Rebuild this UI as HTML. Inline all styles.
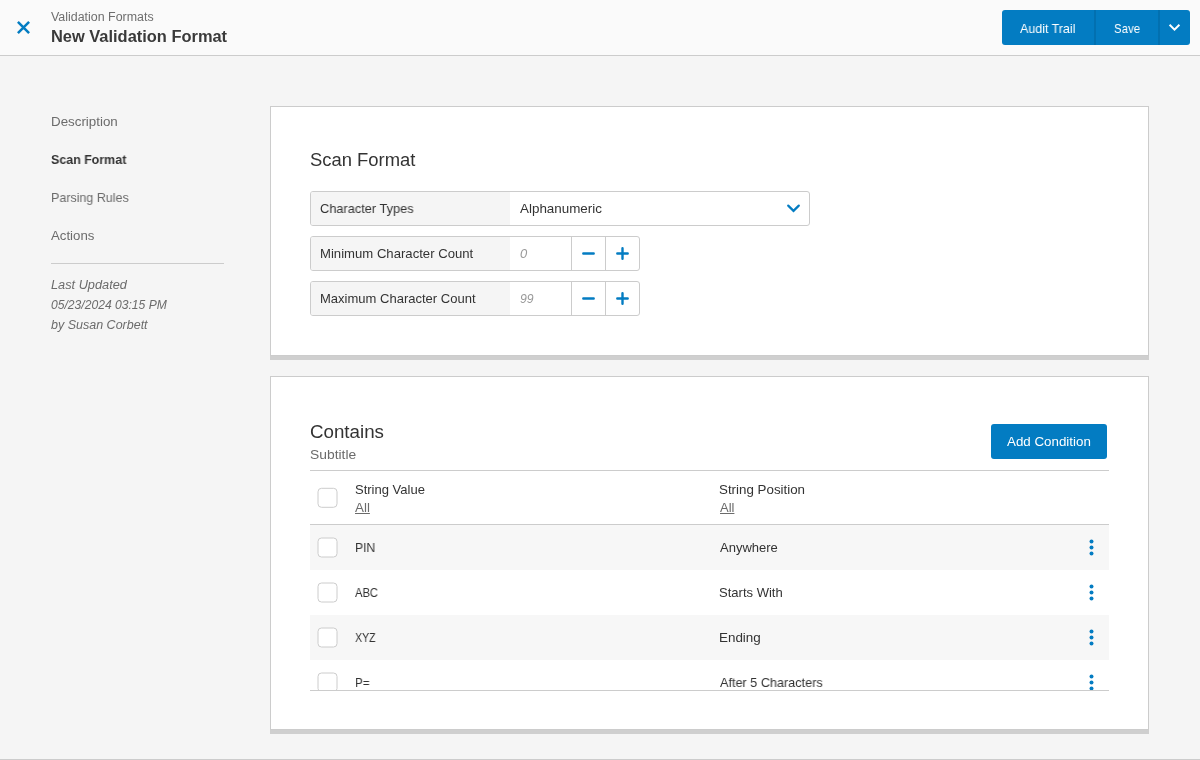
<!DOCTYPE html>
<html lang="en">
<head>
<meta charset="utf-8">
<title>New Validation Format</title>
<style>
*{box-sizing:border-box;margin:0;padding:0}
html,body{width:1200px;height:760px;overflow:hidden}
body{background:#f5f5f5;font-family:"Liberation Sans",sans-serif;color:#333;font-size:13px;position:relative}
.abs{position:absolute}
.t{position:absolute;white-space:nowrap;line-height:1;transform-origin:0 0;will-change:transform}
#hdr{left:0;top:0;width:1200px;height:56px;background:#fafafa;border-bottom:1px solid #ccc}
.btn{position:absolute;background:#037cc2}
.card{position:absolute;left:270px;width:879px;background:#fff;border:1px solid #ccc;box-shadow:0 4px 0 0 #cfcfcf}
.fld{position:absolute;left:310px;height:35px;border:1px solid #ccc;border-radius:3px;background:#fff;overflow:hidden}
.fld .lab{position:absolute;left:0;top:0;width:199px;height:33px;background:#f5f5f5}
.vsep{position:absolute;top:0;width:1px;height:33px;background:#ccc}
.hl{position:absolute;left:310px;width:799px;height:1px;background:#ccc}
.row{position:absolute;left:310px;width:799px;height:45px}
.row.g{background:#f7f7f7}
svg{position:absolute;overflow:visible}
</style>
</head>
<body>
<!-- header -->
<div id="hdr" class="abs"></div>
<svg style="left:0;top:0" width="60" height="56"><path d="M17.9 21.9 L29.1 33.1 M29.1 21.9 L17.9 33.1" stroke="#037cc2" stroke-width="2.5" fill="none"/></svg>
<div class="t" id="crumb" style="left:51px;top:11px;font-size:12px;transform:scaleX(1.0355);color:#6e6e6e">Validation Formats</div>
<div class="t" id="title" style="left:51px;top:29px;font-size:16px;transform:scaleX(1.0262);font-weight:bold;color:#3a3a3a">New Validation Format</div>

<div class="btn" style="left:1002px;top:10px;width:188px;height:35px;border-radius:3px"></div>
<div class="abs" style="left:1094px;top:10px;width:2px;height:35px;background:#0270b0"></div>
<div class="abs" style="left:1158px;top:10px;width:2px;height:35px;background:#0270b0"></div>
<div class="t" id="b1" style="left:1020px;top:22px;font-size:13px;transform:scaleX(0.9584);color:#fff">Audit Trail</div>
<div class="t" id="b2" style="left:1114px;top:22px;font-size:13px;transform:scaleX(0.8792);color:#fff">Save</div>
<svg style="left:1160px;top:10px" width="30" height="35"><path d="M9.6 14.8 L14.5 19.7 L19.4 14.8" stroke="#fff" stroke-width="2" fill="none"/></svg>

<!-- side nav -->
<div class="t" id="n1" style="left:51px;top:115px;font-size:13px;transform:scaleX(1.0273);color:#6b6b6b">Description</div>
<div class="t" id="n2" style="left:51px;top:153px;font-size:13px;transform:scaleX(0.9559);font-weight:bold;color:#333">Scan Format</div>
<div class="t" id="n3" style="left:51px;top:191px;font-size:13px;transform:scaleX(0.9604);color:#6b6b6b">Parsing Rules</div>
<div class="t" id="n4" style="left:51px;top:229px;font-size:13px;transform:scaleX(1.0173);color:#6b6b6b">Actions</div>
<div class="abs" style="left:51px;top:263px;width:173px;height:1px;background:#ccc"></div>
<div class="t" id="m1" style="left:51px;top:279px;font-size:12px;transform:scaleX(1.0630);font-style:italic;color:#6b6b6b">Last Updated</div>
<div class="t" id="m2" style="left:51px;top:299px;font-size:12px;transform:scaleX(1.0093);font-style:italic;color:#6b6b6b">05/23/2024 03:15 PM</div>
<div class="t" id="m3" style="left:51px;top:319px;font-size:12px;transform:scaleX(1.0418);font-style:italic;color:#6b6b6b">by Susan Corbett</div>

<!-- card 1 -->
<div class="card" style="top:106px;height:250px"></div>
<div class="t" id="h1" style="left:310px;top:151px;font-size:18.3px;transform:scaleX(1.0078);color:#333">Scan Format</div>

<div class="fld" style="top:191px;width:500px"><div class="lab"></div></div>
<div class="t" id="l1" style="left:320px;top:202px;font-size:13px;transform:scaleX(0.9829);color:#333">Character Types</div>
<div class="t" id="v1" style="left:520px;top:202px;font-size:13px;transform:scaleX(1.0313);color:#333">Alphanumeric</div>
<svg style="left:780px;top:195px" width="28" height="28"><path d="M8.2 10.6 L13.5 15.9 L18.8 10.6" stroke="#037cc2" stroke-width="2.2" stroke-linecap="round" fill="none"/></svg>

<div class="fld" style="top:236px;width:330px"><div class="lab"></div><div class="vsep" style="left:260px"></div><div class="vsep" style="left:294px"></div></div>
<div class="t" id="l2" style="left:320px;top:247px;font-size:13px;transform:scaleX(1.0098);color:#333">Minimum Character Count</div>
<div class="t" id="v2" style="left:520px;top:248px;font-size:12px;transform:scaleX(1.0800);font-style:italic;color:#999">0</div>
<svg style="left:572px;top:237px" width="68" height="33"><path d="M11.3 16.5 H21.7 M45.3 16.5 H55.7 M50.5 11.3 V21.7" stroke="#037cc2" stroke-width="2.4" stroke-linecap="round" fill="none"/></svg>

<div class="fld" style="top:281px;width:330px"><div class="lab"></div><div class="vsep" style="left:260px"></div><div class="vsep" style="left:294px"></div></div>
<div class="t" id="l3" style="left:320px;top:292px;font-size:13px;transform:scaleX(1.0013);color:#333">Maximum Character Count</div>
<div class="t" id="v3" style="left:520px;top:293px;font-size:12px;transform:scaleX(1.0200);font-style:italic;color:#999">99</div>
<svg style="left:572px;top:282px" width="68" height="33"><path d="M11.3 16.5 H21.7 M45.3 16.5 H55.7 M50.5 11.3 V21.7" stroke="#037cc2" stroke-width="2.4" stroke-linecap="round" fill="none"/></svg>

<!-- card 2 -->
<div class="card" style="top:376px;height:354px"></div>
<div class="t" id="h2" style="left:310px;top:423px;font-size:18.3px;transform:scaleX(1.0250);color:#333">Contains</div>
<div class="t" id="sub" style="left:310px;top:448px;font-size:13px;transform:scaleX(1.0649);color:#6b6b6b">Subtitle</div>
<div class="btn" style="left:991px;top:424px;width:116px;height:35px;border-radius:3px"></div>
<div class="t" id="b3" style="left:1007px;top:435px;font-size:13px;transform:scaleX(1.0262);color:#fff">Add Condition</div>

<div class="hl" style="top:470px"></div>
<div class="t" id="c1" style="left:355px;top:483px;font-size:13px;transform:scaleX(0.9955);color:#333">String Value</div>
<div class="t" id="a1" style="left:355px;top:502px;font-size:12px;transform:scaleX(1.1152);color:#6b6b6b;text-decoration:underline">All</div>
<div class="t" id="c2" style="left:719px;top:483px;font-size:13px;transform:scaleX(1.0265);color:#333">String Position</div>
<div class="t" id="a2" style="left:720px;top:502px;font-size:12px;transform:scaleX(1.0807);color:#6b6b6b;text-decoration:underline">All</div>
<div class="hl" style="top:524px"></div>

<div class="row g" style="top:525px"></div>
<div class="row g" style="top:615px"></div>

<div class="t" id="r1a" style="left:355px;top:541px;font-size:13px;transform:scaleX(0.9314);color:#333">PIN</div>
<div class="t" id="r1b" style="left:720px;top:541px;font-size:13px;transform:scaleX(0.9973);color:#333">Anywhere</div>
<div class="t" id="r2a" style="left:355px;top:586px;font-size:13px;transform:scaleX(0.8597);color:#333">ABC</div>
<div class="t" id="r2b" style="left:719px;top:586px;font-size:13px;transform:scaleX(1.0027);color:#333">Starts With</div>
<div class="t" id="r3a" style="left:355px;top:631px;font-size:13px;transform:scaleX(0.8141);color:#333">XYZ</div>
<div class="t" id="r3b" style="left:719px;top:631px;font-size:13px;transform:scaleX(1.0319);color:#333">Ending</div>
<div class="t" id="r4a" style="left:355px;top:676px;font-size:13px;transform:scaleX(0.8962);color:#333">P=</div>
<div class="t" id="r4b" style="left:720px;top:676px;font-size:13px;transform:scaleX(0.9734);color:#333">After 5 Characters</div>

<!-- checkboxes + kebabs -->
<svg style="left:310px;top:471px" width="799" height="219" viewBox="0 0 799 219">
<g fill="#fff" stroke="#cccccc" stroke-width="1">
<rect x="8" y="17.3" width="19" height="19" rx="3.5"/>
<rect x="8" y="67" width="19" height="19" rx="3.5"/>
<rect x="8" y="112" width="19" height="19" rx="3.5"/>
<rect x="8" y="157" width="19" height="19" rx="3.5"/>
<rect x="8" y="202" width="19" height="19" rx="3.5"/>
</g>
<g fill="#037cc2">
<circle cx="781.5" cy="70.5" r="2"/><circle cx="781.5" cy="76.5" r="2"/><circle cx="781.5" cy="82.5" r="2"/>
<circle cx="781.5" cy="115.5" r="2"/><circle cx="781.5" cy="121.5" r="2"/><circle cx="781.5" cy="127.5" r="2"/>
<circle cx="781.5" cy="160.5" r="2"/><circle cx="781.5" cy="166.5" r="2"/><circle cx="781.5" cy="172.5" r="2"/>
<circle cx="781.5" cy="205.5" r="2"/><circle cx="781.5" cy="211.5" r="2"/><circle cx="781.5" cy="217.5" r="2"/>
</g>
</svg>
<div class="abs" style="left:310px;top:690px;width:799px;height:39px;background:#fff"></div>
<div class="hl" style="top:690px"></div>

<!-- footer line -->
<div class="abs" style="left:0;top:759px;width:1200px;height:1px;background:#ccc"></div>
</body>
</html>
